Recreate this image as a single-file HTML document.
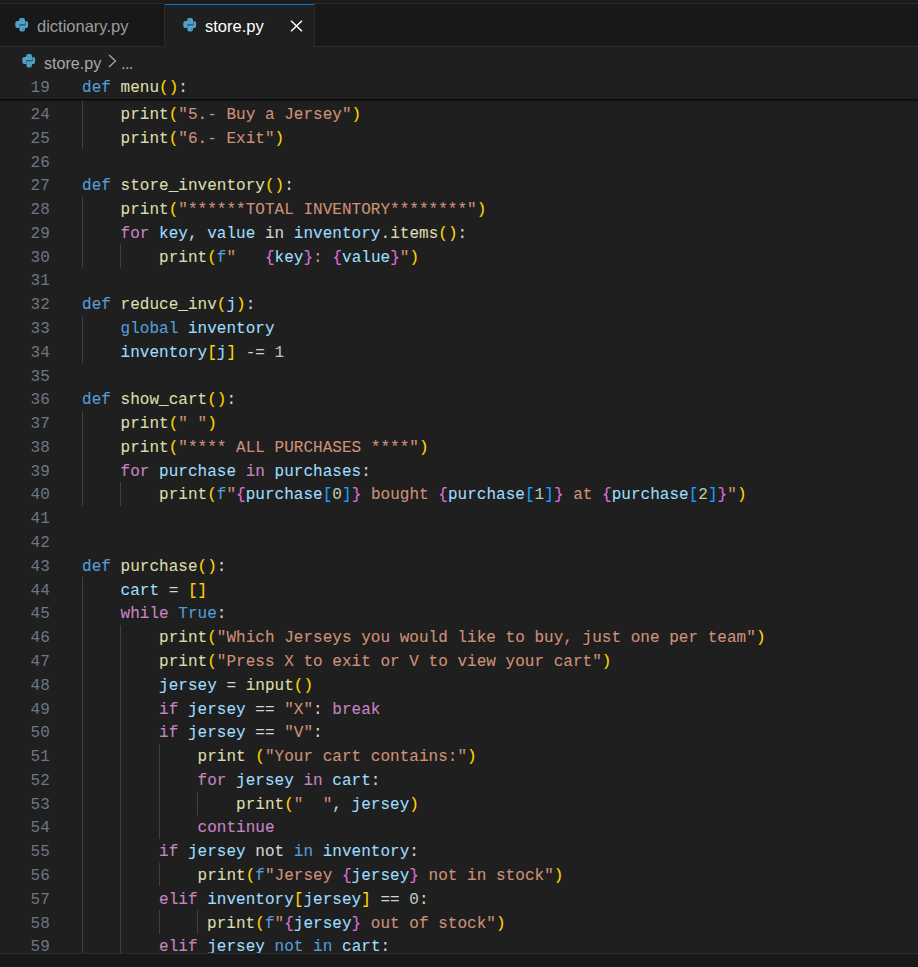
<!DOCTYPE html>
<html><head><meta charset="utf-8"><style>
html,body{margin:0;padding:0;}
body{width:918px;height:967px;overflow:hidden;background:#1f1f1f;position:relative;font-family:"Liberation Sans",sans-serif;}
.a{position:absolute;}
#topstrip{left:0;top:0;width:918px;height:3px;background:#1b1b1b;}
#tabbar{left:0;top:3px;width:918px;height:44px;background:#181818;box-sizing:border-box;border-top:1px solid #2b2b2b;border-bottom:1px solid #2b2b2b;}
#tab2{left:164px;top:3px;width:151px;height:44px;background:#1f1f1f;box-sizing:border-box;border-left:1px solid #2b2b2b;border-right:1px solid #2b2b2b;}
#tab2b{left:165px;top:4px;width:149px;height:1px;background:#0078d4;}
#tab1r{left:164px;top:3px;width:1px;height:43px;background:#2b2b2b;}
.tt{font-size:16.5px;line-height:20px;white-space:pre;}
.py{position:absolute;}
#bc{left:0;top:47px;width:918px;height:28px;background:#1f1f1f;}
#sticky{left:-10px;top:75px;width:938px;height:23.75px;background:#1f1f1f;z-index:5;box-shadow:0 3px 2px -2px #000;}
#editor{left:0;top:0;width:918px;height:953px;overflow:hidden;}
.ln{position:absolute;left:0;width:49.8px;text-align:right;font-family:"Liberation Mono",monospace;font-size:16px;line-height:23.75px;height:23.75px;color:#6e7681;white-space:pre;}
.cd{position:absolute;font-family:"Liberation Mono",monospace;font-size:16px;line-height:23.75px;height:23.75px;white-space:pre;color:#d4d4d4;letter-spacing:0.025px;-webkit-text-stroke:0.1px currentColor;}
.g{position:absolute;width:1px;height:23.8px;background:#404040;}
i{font-style:normal;}
.k{color:#569cd6}.c{color:#c586c0}.f{color:#dcdcaa}.v{color:#9cdcfe}.s{color:#ce9178}.n{color:#b5cea8}.o{color:#d4d4d4}
.b1{color:#ffd700}.b2{color:#da70d6}.b3{color:#179fff}
#bottom{left:0;top:953px;width:918px;height:14px;background:#181818;border-top:1px solid #2b2b2b;box-sizing:border-box;}
</style></head><body>
<div id="editor" class="a">
<div class="ln" style="top:80.22px">23</div>
<div class="g" style="top:77.92px;left:82px"></div>
<div class="cd" style="top:80.22px;left:120.50px"><i class="f">print</i><i class="b1">(</i><i class="s">"4.- Sell a Jersey"</i><i class="b1">)</i></div>
<div class="ln" style="top:104.00px">24</div>
<div class="g" style="top:101.70px;left:82px"></div>
<div class="cd" style="top:104.00px;left:120.50px"><i class="f">print</i><i class="b1">(</i><i class="s">"5.- Buy a Jersey"</i><i class="b1">)</i></div>
<div class="ln" style="top:127.78px">25</div>
<div class="g" style="top:125.48px;left:82px"></div>
<div class="cd" style="top:127.78px;left:120.50px"><i class="f">print</i><i class="b1">(</i><i class="s">"6.- Exit"</i><i class="b1">)</i></div>
<div class="ln" style="top:151.56px">26</div>
<div class="ln" style="top:175.34px">27</div>
<div class="cd" style="top:175.34px;left:82.00px"><i class="k">def</i><i class="o"> </i><i class="f">store_inventory</i><i class="b1">()</i><i class="o">:</i></div>
<div class="ln" style="top:199.12px">28</div>
<div class="g" style="top:196.82px;left:82px"></div>
<div class="cd" style="top:199.12px;left:120.50px"><i class="f">print</i><i class="b1">(</i><i class="s">"******TOTAL INVENTORY********"</i><i class="b1">)</i></div>
<div class="ln" style="top:222.90px">29</div>
<div class="g" style="top:220.60px;left:82px"></div>
<div class="cd" style="top:222.90px;left:120.50px"><i class="c">for</i><i class="o"> </i><i class="v">key</i><i class="o">, </i><i class="v">value</i><i class="o"> in </i><i class="v">inventory</i><i class="o">.</i><i class="f">items</i><i class="b1">()</i><i class="o">:</i></div>
<div class="ln" style="top:246.68px">30</div>
<div class="g" style="top:244.38px;left:82px"></div>
<div class="g" style="top:244.38px;left:120px"></div>
<div class="cd" style="top:246.68px;left:159.00px"><i class="f">print</i><i class="b1">(</i><i class="k">f</i><i class="s">"   </i><i class="b2">{</i><i class="v">key</i><i class="b2">}</i><i class="s">: </i><i class="b2">{</i><i class="v">value</i><i class="b2">}</i><i class="s">"</i><i class="b1">)</i></div>
<div class="ln" style="top:270.46px">31</div>
<div class="ln" style="top:294.24px">32</div>
<div class="cd" style="top:294.24px;left:82.00px"><i class="k">def</i><i class="o"> </i><i class="f">reduce_inv</i><i class="b1">(</i><i class="v">j</i><i class="b1">)</i><i class="o">:</i></div>
<div class="ln" style="top:318.02px">33</div>
<div class="g" style="top:315.72px;left:82px"></div>
<div class="cd" style="top:318.02px;left:120.50px"><i class="k">global</i><i class="o"> </i><i class="v">inventory</i></div>
<div class="ln" style="top:341.80px">34</div>
<div class="g" style="top:339.50px;left:82px"></div>
<div class="cd" style="top:341.80px;left:120.50px"><i class="v">inventory</i><i class="b1">[</i><i class="v">j</i><i class="b1">]</i><i class="o"> -= </i><i class="n">1</i></div>
<div class="ln" style="top:365.58px">35</div>
<div class="ln" style="top:389.36px">36</div>
<div class="cd" style="top:389.36px;left:82.00px"><i class="k">def</i><i class="o"> </i><i class="f">show_cart</i><i class="b1">()</i><i class="o">:</i></div>
<div class="ln" style="top:413.14px">37</div>
<div class="g" style="top:410.84px;left:82px"></div>
<div class="cd" style="top:413.14px;left:120.50px"><i class="f">print</i><i class="b1">(</i><i class="s">" "</i><i class="b1">)</i></div>
<div class="ln" style="top:436.92px">38</div>
<div class="g" style="top:434.62px;left:82px"></div>
<div class="cd" style="top:436.92px;left:120.50px"><i class="f">print</i><i class="b1">(</i><i class="s">"**** ALL PURCHASES ****"</i><i class="b1">)</i></div>
<div class="ln" style="top:460.70px">39</div>
<div class="g" style="top:458.40px;left:82px"></div>
<div class="cd" style="top:460.70px;left:120.50px"><i class="c">for</i><i class="o"> </i><i class="v">purchase</i><i class="o"> </i><i class="c">in</i><i class="o"> </i><i class="v">purchases</i><i class="o">:</i></div>
<div class="ln" style="top:484.48px">40</div>
<div class="g" style="top:482.18px;left:82px"></div>
<div class="g" style="top:482.18px;left:120px"></div>
<div class="cd" style="top:484.48px;left:159.00px"><i class="f">print</i><i class="b1">(</i><i class="k">f</i><i class="s">"</i><i class="b2">{</i><i class="v">purchase</i><i class="b3">[</i><i class="n">0</i><i class="b3">]</i><i class="b2">}</i><i class="s"> bought </i><i class="b2">{</i><i class="v">purchase</i><i class="b3">[</i><i class="n">1</i><i class="b3">]</i><i class="b2">}</i><i class="s"> at </i><i class="b2">{</i><i class="v">purchase</i><i class="b3">[</i><i class="n">2</i><i class="b3">]</i><i class="b2">}</i><i class="s">"</i><i class="b1">)</i></div>
<div class="ln" style="top:508.26px">41</div>
<div class="ln" style="top:532.04px">42</div>
<div class="ln" style="top:555.82px">43</div>
<div class="cd" style="top:555.82px;left:82.00px"><i class="k">def</i><i class="o"> </i><i class="f">purchase</i><i class="b1">()</i><i class="o">:</i></div>
<div class="ln" style="top:579.60px">44</div>
<div class="g" style="top:577.30px;left:82px"></div>
<div class="cd" style="top:579.60px;left:120.50px"><i class="v">cart</i><i class="o"> = </i><i class="b1">[]</i></div>
<div class="ln" style="top:603.38px">45</div>
<div class="g" style="top:601.08px;left:82px"></div>
<div class="cd" style="top:603.38px;left:120.50px"><i class="c">while</i><i class="o"> </i><i class="k">True</i><i class="o">:</i></div>
<div class="ln" style="top:627.16px">46</div>
<div class="g" style="top:624.86px;left:82px"></div>
<div class="g" style="top:624.86px;left:120px"></div>
<div class="cd" style="top:627.16px;left:159.00px"><i class="f">print</i><i class="b1">(</i><i class="s">"Which Jerseys you would like to buy, just one per team"</i><i class="b1">)</i></div>
<div class="ln" style="top:650.94px">47</div>
<div class="g" style="top:648.64px;left:82px"></div>
<div class="g" style="top:648.64px;left:120px"></div>
<div class="cd" style="top:650.94px;left:159.00px"><i class="f">print</i><i class="b1">(</i><i class="s">"Press X to exit or V to view your cart"</i><i class="b1">)</i></div>
<div class="ln" style="top:674.72px">48</div>
<div class="g" style="top:672.42px;left:82px"></div>
<div class="g" style="top:672.42px;left:120px"></div>
<div class="cd" style="top:674.72px;left:159.00px"><i class="v">jersey</i><i class="o"> = </i><i class="f">input</i><i class="b1">()</i></div>
<div class="ln" style="top:698.50px">49</div>
<div class="g" style="top:696.20px;left:82px"></div>
<div class="g" style="top:696.20px;left:120px"></div>
<div class="cd" style="top:698.50px;left:159.00px"><i class="c">if</i><i class="o"> </i><i class="v">jersey</i><i class="o"> == </i><i class="s">"X"</i><i class="o">: </i><i class="c">break</i></div>
<div class="ln" style="top:722.28px">50</div>
<div class="g" style="top:719.98px;left:82px"></div>
<div class="g" style="top:719.98px;left:120px"></div>
<div class="cd" style="top:722.28px;left:159.00px"><i class="c">if</i><i class="o"> </i><i class="v">jersey</i><i class="o"> == </i><i class="s">"V"</i><i class="o">:</i></div>
<div class="ln" style="top:746.06px">51</div>
<div class="g" style="top:743.76px;left:82px"></div>
<div class="g" style="top:743.76px;left:120px"></div>
<div class="g" style="top:743.76px;left:159px"></div>
<div class="cd" style="top:746.06px;left:197.50px"><i class="f">print</i><i class="o"> </i><i class="b1">(</i><i class="s">"Your cart contains:"</i><i class="b1">)</i></div>
<div class="ln" style="top:769.84px">52</div>
<div class="g" style="top:767.54px;left:82px"></div>
<div class="g" style="top:767.54px;left:120px"></div>
<div class="g" style="top:767.54px;left:159px"></div>
<div class="cd" style="top:769.84px;left:197.50px"><i class="c">for</i><i class="o"> </i><i class="v">jersey</i><i class="o"> </i><i class="c">in</i><i class="o"> </i><i class="v">cart</i><i class="o">:</i></div>
<div class="ln" style="top:793.62px">53</div>
<div class="g" style="top:791.32px;left:82px"></div>
<div class="g" style="top:791.32px;left:120px"></div>
<div class="g" style="top:791.32px;left:159px"></div>
<div class="g" style="top:791.32px;left:197px"></div>
<div class="cd" style="top:793.62px;left:236.00px"><i class="f">print</i><i class="b1">(</i><i class="s">"  "</i><i class="o">, </i><i class="v">jersey</i><i class="b1">)</i></div>
<div class="ln" style="top:817.40px">54</div>
<div class="g" style="top:815.10px;left:82px"></div>
<div class="g" style="top:815.10px;left:120px"></div>
<div class="g" style="top:815.10px;left:159px"></div>
<div class="cd" style="top:817.40px;left:197.50px"><i class="c">continue</i></div>
<div class="ln" style="top:841.18px">55</div>
<div class="g" style="top:838.88px;left:82px"></div>
<div class="g" style="top:838.88px;left:120px"></div>
<div class="cd" style="top:841.18px;left:159.00px"><i class="c">if</i><i class="o"> </i><i class="v">jersey</i><i class="o"> not </i><i class="k">in</i><i class="o"> </i><i class="v">inventory</i><i class="o">:</i></div>
<div class="ln" style="top:864.96px">56</div>
<div class="g" style="top:862.66px;left:82px"></div>
<div class="g" style="top:862.66px;left:120px"></div>
<div class="g" style="top:862.66px;left:159px"></div>
<div class="cd" style="top:864.96px;left:197.50px"><i class="f">print</i><i class="b1">(</i><i class="k">f</i><i class="s">"Jersey </i><i class="b2">{</i><i class="v">jersey</i><i class="b2">}</i><i class="s"> not in stock"</i><i class="b1">)</i></div>
<div class="ln" style="top:888.74px">57</div>
<div class="g" style="top:886.44px;left:82px"></div>
<div class="g" style="top:886.44px;left:120px"></div>
<div class="cd" style="top:888.74px;left:159.00px"><i class="c">elif</i><i class="o"> </i><i class="v">inventory</i><i class="b1">[</i><i class="v">jersey</i><i class="b1">]</i><i class="o"> == </i><i class="n">0</i><i class="o">:</i></div>
<div class="ln" style="top:912.52px">58</div>
<div class="g" style="top:910.22px;left:82px"></div>
<div class="g" style="top:910.22px;left:120px"></div>
<div class="g" style="top:910.22px;left:159px"></div>
<div class="g" style="top:910.22px;left:197px"></div>
<div class="cd" style="top:912.52px;left:207.12px"><i class="f">print</i><i class="b1">(</i><i class="k">f</i><i class="s">"</i><i class="b2">{</i><i class="v">jersey</i><i class="b2">}</i><i class="s"> out of stock"</i><i class="b1">)</i></div>
<div class="ln" style="top:936.30px">59</div>
<div class="g" style="top:934.00px;left:82px"></div>
<div class="g" style="top:934.00px;left:120px"></div>
<div class="cd" style="top:936.30px;left:159.00px"><i class="c">elif</i><i class="o"> </i><i class="v">jersey</i><i class="o"> </i><i class="k">not</i><i class="o"> </i><i class="k">in</i><i class="o"> </i><i class="v">cart</i><i class="o">:</i></div>
</div>
<div id="topstrip" class="a"></div>
<div id="tabbar" class="a"></div>
<div id="tab1r" class="a"></div>
<svg class="py" style="left:14.5px;top:18px" viewBox="0 0 14 14" width="14" height="14"><path fill="#50a0c8" d="M4 2Q4 0 6 0H8Q10 0 10 2V6.6H4.4V10H2.3Q0.3 10 0.3 8V5Q0.3 3 2.3 3H4Z"/><path fill="#50a0c8" d="M4.4 7.2H10.4V3H11.1Q13.1 3 13.1 5V8Q13.1 10 11.1 10H10V11.6Q10 13.6 8 13.6H6.4Q4.4 13.6 4.4 11.6Z"/><path d="M4.9 1.2L6.3 2.6M9.5 12.4L8.1 11" stroke="#1f1f1f" stroke-width="0.7" opacity="0.6"/></svg>
<div class="a tt" style="left:37px;top:16px;color:#9d9d9d">dictionary.py</div>
<div id="tab2" class="a"></div><div id="tab2b" class="a"></div>
<svg class="py" style="left:182.5px;top:18px" viewBox="0 0 14 14" width="14" height="14"><path fill="#50a0c8" d="M4 2Q4 0 6 0H8Q10 0 10 2V6.6H4.4V10H2.3Q0.3 10 0.3 8V5Q0.3 3 2.3 3H4Z"/><path fill="#50a0c8" d="M4.4 7.2H10.4V3H11.1Q13.1 3 13.1 5V8Q13.1 10 11.1 10H10V11.6Q10 13.6 8 13.6H6.4Q4.4 13.6 4.4 11.6Z"/><path d="M4.9 1.2L6.3 2.6M9.5 12.4L8.1 11" stroke="#1f1f1f" stroke-width="0.7" opacity="0.6"/></svg>
<div class="a tt" style="left:205px;top:16px;color:#ffffff">store.py</div>
<svg class="a" style="left:290px;top:20px" width="13" height="12" viewBox="0 0 13 12"><path d="M1 0.8L12 11.2M12 0.8L1 11.2" stroke="#ffffff" stroke-width="1.5" fill="none"/></svg>
<div id="bc" class="a"></div>
<svg class="py" style="left:22px;top:54px" viewBox="0 0 14 14" width="14" height="14"><path fill="#50a0c8" d="M4 2Q4 0 6 0H8Q10 0 10 2V6.6H4.4V10H2.3Q0.3 10 0.3 8V5Q0.3 3 2.3 3H4Z"/><path fill="#50a0c8" d="M4.4 7.2H10.4V3H11.1Q13.1 3 13.1 5V8Q13.1 10 11.1 10H10V11.6Q10 13.6 8 13.6H6.4Q4.4 13.6 4.4 11.6Z"/><path d="M4.9 1.2L6.3 2.6M9.5 12.4L8.1 11" stroke="#1f1f1f" stroke-width="0.7" opacity="0.6"/></svg>
<div class="a tt" style="left:44px;top:52.8px;font-size:16.1px;color:#a9a9a9">store.py</div>
<svg class="a" style="left:108px;top:54px" width="9" height="14" viewBox="0 0 9 14"><path d="M1 1L7.5 7L1 13" stroke="#a9a9a9" stroke-width="1.2" fill="none"/></svg>
<div class="a tt" style="left:121px;top:52.8px;color:#a9a9a9;letter-spacing:-0.7px">...</div>
<div id="sticky" class="a"><div class="ln" style="top:1.5px;left:10px">19</div><div class="cd" style="top:1.5px;left:92px"><i class="k">def</i> <i class="f">menu</i><i class="b1">()</i><i class="o">:</i></div></div>
<div id="bottom" class="a"></div>
</body></html>
